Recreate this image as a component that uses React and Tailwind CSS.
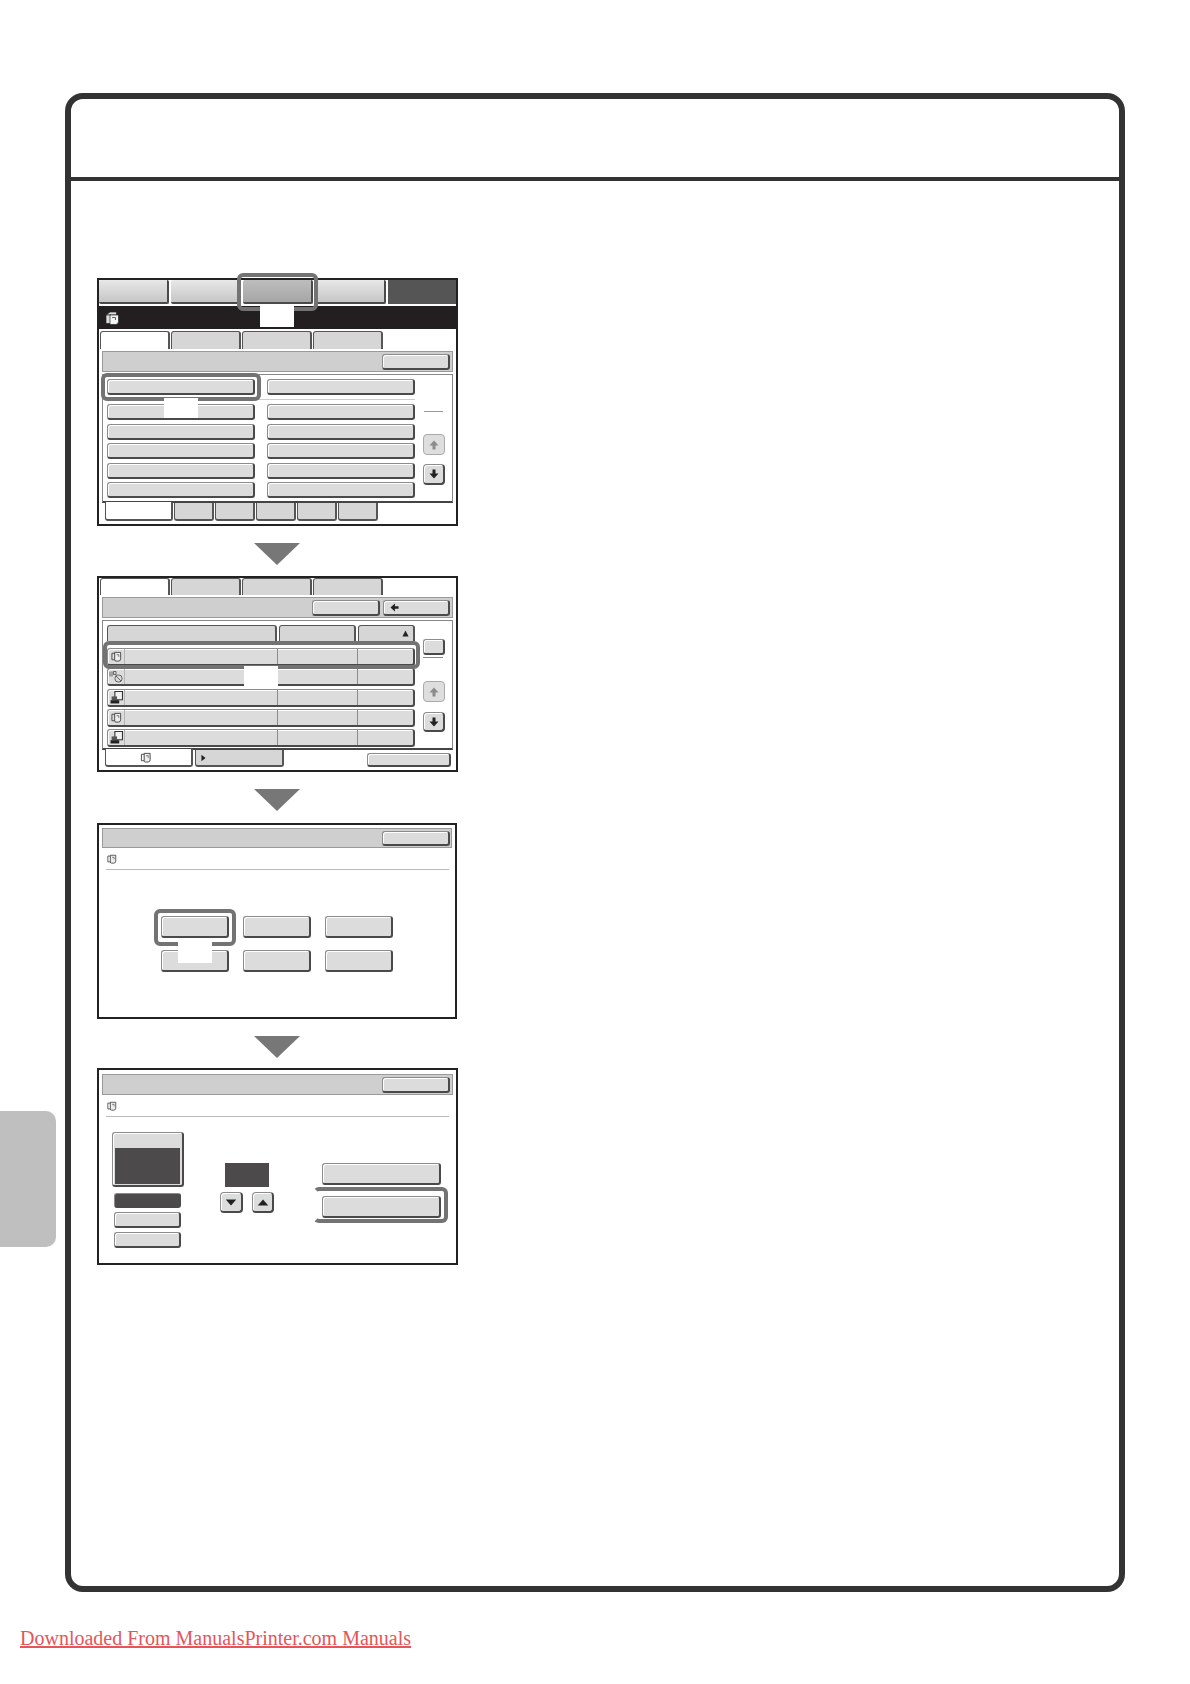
import React from 'react';

// shared button look of the touch panel
const edge = 'border border-[#8c8c8c] border-r-2 border-b-2 border-r-[#4a4a4a] border-b-[#4a4a4a] shadow-[inset_1px_1px_0_#fff]';
const btn = `rounded-[3px] ${edge} bg-[#dcdcdc]`;
const btnDark = `rounded-[3px] ${edge} shadow-none bg-[#4d4a4b]`;
const btnRound = `rounded-[4px] ${edge} bg-[#dcdcdc]`;
const topTab = 'rounded-[2px] border-r-2 border-b-2 border-[#4a4a4a] bg-gradient-to-b from-[#e8e8e8] to-[#c6c6c6]';
const topTabOn = 'rounded-[2px] border-r-2 border-b-2 border-[#4a4a4a] bg-gradient-to-b from-[#bdbdbd] to-[#a6a6a6]';
const greyTab = 'rounded-t-[3px] border border-b-0 border-[#555] border-r-2 bg-[#d6d6d6]';
const whiteTab = 'rounded-t-[3px] border border-b-0 border-[#555] border-r-2 bg-white';
const bottomTab = 'rounded-b-[3px] border border-t-0 border-[#555] border-r-2 border-b-2 bg-[#d6d6d6]';
const bottomOn = 'relative -mt-px rounded-b-[3px] border border-t-0 border-[#555] border-r-2 border-b-2 bg-white';
const bar = 'flex items-center justify-end border border-[#9a9a9a] bg-[#cfcfcf]';
const ring = 'absolute rounded-[6px] border-4 border-[#737373]';
const listPanel = 'ml-[3px] mt-[2px] flex w-[351px] border border-[#888] border-b-2 border-b-[#444] pl-[4px] pt-[4px]';

const CopyIcon = ({ className }) => (
    <svg viewBox="0 0 12 12" className={className} fill="none" stroke="#444" strokeWidth="1">
        <path d="M1 2.5h4v7H1z" />
        <path d="M4 1.5h6.5v7a2.5 2.5 0 0 1-2.5 2.5H5.5a1.5 1.5 0 0 1-1.5-1.5z" fill="#eee" />
        <path d="M6 4h2.5v2.5" strokeWidth="0.7" />
    </svg>
);

const SendIcon = ({ className }) => (
    <svg viewBox="0 0 14 12" className={className} fill="none" stroke="#555" strokeWidth="0.9">
        <path d="M1 0.5v5M3 0.5v5M4.5 0.5h2.5v3H4.5z" />
        <circle cx="9.5" cy="7.5" r="3.6" />
        <path d="M7 5l5 5" />
    </svg>
);

const PrintIcon = ({ className }) => (
    <svg viewBox="0 0 12 12" className={className}>
        <path d="M4.5 0.5h7v7.5h-7z" fill="#f2f2f2" stroke="#333" strokeWidth="1" />
        <path d="M1.5 5h5v3.5h-5z" fill="#555" />
        <path d="M0.5 8.5h8v3h-8z" fill="#222" />
    </svg>
);

const StackIcon = () => (
    <svg viewBox="0 0 14 14" className="h-[14px] w-[14px]" fill="#ddd" stroke="#222" strokeWidth="0.7">
        <path d="M1 4l4-3h6.5V4z" />
        <path d="M1 4h5v8.5H1z" />
        <path d="M5 4h8.5v6.5a3 3 0 0 1-3 3H5z" fill="#f4f4f4" />
        <path d="M7 6.5h3.5V9" fill="none" />
    </svg>
);

const ArrowV = ({ up, muted }) => (
    <svg viewBox="0 0 10 10" className="h-[10px] w-[10px]" fill={muted ? '#8c8c8c' : '#222'}>
        <path d={up ? 'M5 0.5L9.5 5.5H6.5V9.5H3.5V5.5H0.5z' : 'M5 9.5L9.5 4.5H6.5V0.5H3.5V4.5H0.5z'} />
    </svg>
);

const Scroll = ({ muted, up, className }) => (
    <div className={`flex w-[22px] items-center justify-center ${className} ${muted ? 'rounded-[4px] border border-[#aaa] bg-[#dedede]' : btnRound}`}>
        <ArrowV up={up} muted={muted} />
    </div>
);

const Tabs = ({ className }) => (
    <div className={`flex gap-px ${className}`}>
        <div className={`w-[70px] ${whiteTab}`} />
        <div className={`w-[70px] ${greyTab}`} />
        <div className={`w-[70px] ${greyTab}`} />
        <div className={`w-[70px] ${greyTab}`} />
    </div>
);

const ListRow = () => (
    <div className="flex gap-[12px]">
        <div className={`h-[16px] w-[148px] ${btn}`} />
        <div className={`h-[16px] w-[148px] ${btn}`} />
    </div>
);

const JobRow = ({ icon }) => (
    <div className={`flex h-[18px] w-[308px] items-center ${btn}`}>
        <div className="flex h-full w-[17px] items-center justify-center border-r border-[#b5b5b5]">{icon}</div>
        <div className="h-full w-[153px] border-r border-[#8c8c8c]" />
        <div className="h-full w-[80px] border-r border-[#8c8c8c]" />
    </div>
);

const FirstScreen = () => (
    <div className="relative h-[248px] w-[361px] border-2 border-[#222] bg-white">
        <div className="flex h-[24px] gap-[2px]">
            <div className={`w-[70px] ${topTab}`} />
            <div className={`w-[70px] ${topTab}`} />
            <div className={`w-[70px] ${topTabOn}`} />
            <div className={`w-[71px] ${topTab}`} />
            <div className="flex-1 bg-[#555]" />
        </div>
        <div className="mt-[2px] flex h-[23px] items-center bg-[#231f20] pl-[6px]">
            <StackIcon />
        </div>
        <Tabs className="ml-[1px] mt-[2px] h-[18px]" />
        <div className={`ml-[3px] mt-[2px] h-[21px] w-[351px] pr-[2px] ${bar}`}>
            <div className={`h-[16px] w-[68px] ${btn}`} />
        </div>
        <div className={`${listPanel} h-[129px]`}>
            <div className="flex flex-col">
                <ListRow />
                <div className="mb-[4px] ml-[-4px] mt-[4px] h-px w-[312px] bg-[#ccc]" />
                <div className="flex flex-col gap-[3.6px]">
                    <ListRow />
                    <ListRow />
                    <ListRow />
                    <ListRow />
                    <ListRow />
                </div>
            </div>
            <div className="ml-[8px] flex flex-col">
                <div className="ml-[1px] mt-[32px] h-px w-[19px] bg-[#999]" />
                <Scroll up muted className="mt-[22px] h-[21px]" />
                <Scroll className="mt-[9px] h-[21px]" />
            </div>
        </div>
        <div className="ml-[6px] flex h-[18px] gap-px">
            <div className={`h-[19px] w-[68px] ${bottomOn}`} />
            <div className={`w-[40px] ${bottomTab}`} />
            <div className={`w-[40px] ${bottomTab}`} />
            <div className={`w-[40px] ${bottomTab}`} />
            <div className={`w-[40px] ${bottomTab}`} />
            <div className={`w-[40px] ${bottomTab}`} />
        </div>
        <div className={`${ring} left-[138px] top-[-7px] h-[38px] w-[81px]`} />
        <div className="absolute left-[161px] top-[25px] h-[22px] w-[34px] bg-white" />
        <div className={`${ring} left-[2px] top-[93px] h-[28px] w-[160px]`} />
        <div className="absolute left-[65px] top-[118px] h-[20px] w-[34px] bg-white" />
    </div>
);

const SecondScreen = () => (
    <div className="relative h-[196px] w-[361px] border-2 border-[#222] bg-white">
        <Tabs className="ml-[1px] h-[17px]" />
        <div className={`ml-[3px] mt-[2px] h-[21px] w-[351px] gap-[3px] pr-[2px] ${bar}`}>
            <div className={`h-[16px] w-[68px] ${btn}`} />
            <div className={`flex h-[16px] w-[67px] items-center pl-[6px] ${btn}`}>
                <svg viewBox="0 0 10 10" className="h-[9px] w-[9px]" fill="#222">
                    <path d="M0.5 5L5.5 0.5V3.5H9.5V6.5H5.5V9.5z" />
                </svg>
            </div>
        </div>
        <div className={`${listPanel} h-[130px]`}>
            <div className="flex flex-col">
                <div className="flex h-[16px] w-[308px] gap-[2px]">
                    <div className={`w-[170px] ${greyTab}`} />
                    <div className={`w-[77px] ${greyTab}`} />
                    <div className={`flex w-[57px] items-center justify-end pr-[4px] ${greyTab}`}>
                        <svg viewBox="0 0 8 8" className="h-[7px] w-[7px]" fill="#222"><path d="M4 0.5L7.5 7.5H0.5z" /></svg>
                    </div>
                </div>
                <div className="mt-[7px] flex flex-col gap-[2.3px]">
                    <JobRow icon={<CopyIcon className="h-[11px] w-[11px]" />} />
                    <JobRow icon={<SendIcon className="h-[12px] w-[14px]" />} />
                    <JobRow icon={<PrintIcon className="h-[13px] w-[13px]" />} />
                    <JobRow icon={<CopyIcon className="h-[11px] w-[11px]" />} />
                    <JobRow icon={<PrintIcon className="h-[13px] w-[13px]" />} />
                </div>
            </div>
            <div className="ml-[8px] flex flex-col">
                <div className={`mt-[14px] h-[16px] w-[22px] ${btn}`} />
                <div className="mt-[2px] h-px w-[20px] bg-[#888]" />
                <Scroll up muted className="mt-[23px] h-[21px]" />
                <Scroll className="mt-[10px] h-[20px]" />
            </div>
        </div>
        <div className="flex h-[18px] items-start">
            <div className={`ml-[6px] flex h-[18px] w-[88px] items-center justify-center ${bottomOn}`}>
                <CopyIcon className="mr-[6px] h-[11px] w-[12px]" />
            </div>
            <div className={`ml-[2px] flex h-[17px] w-[89px] items-center pl-[5px] ${bottomTab}`}>
                <svg viewBox="0 0 6 8" className="h-[8px] w-[5px]" fill="#222"><path d="M0.5 0L5.5 4L0.5 8z" /></svg>
            </div>
            <div className={`ml-auto mr-[5px] mt-[3px] h-[14px] w-[84px] ${btn}`} />
        </div>
        <div className={`${ring} left-[4px] top-[63px] h-[28px] w-[317px]`} />
        <div className="absolute left-[145px] top-[88px] h-[21px] w-[34px] bg-white" />
    </div>
);

const ThirdScreen = () => (
    <div className="relative h-[196px] w-[360px] border-2 border-[#222] bg-white">
        <div className={`ml-[3px] mt-[3px] h-[20px] w-[350px] pr-[1px] ${bar}`}>
            <div className={`h-[15px] w-[68px] ${btn}`} />
        </div>
        <div className="ml-[7px] flex h-[22px] w-[343px] items-center border-b border-[#bbb] pl-px">
            <CopyIcon className="h-[10px] w-[10px]" />
        </div>
        <div className="ml-[62px] mt-[46px] grid w-[232px] grid-cols-3 gap-x-[14px] gap-y-[12px]">
            <div className={`h-[22px] ${btn}`} />
            <div className={`h-[22px] ${btn}`} />
            <div className={`h-[22px] ${btn}`} />
            <div className={`h-[22px] ${btn}`} />
            <div className={`h-[22px] ${btn}`} />
            <div className={`h-[22px] ${btn}`} />
        </div>
        <div className={`${ring} left-[55px] top-[84px] h-[37px] w-[82px]`} />
        <div className="absolute left-[79px] top-[115px] h-[23px] w-[34px] bg-white" />
    </div>
);

const FourthScreen = () => (
    <div className="relative h-[197px] w-[361px] border-2 border-[#222] bg-white">
        <div className={`ml-[3px] mt-[4px] h-[21px] w-[351px] pr-[2px] ${bar}`}>
            <div className={`h-[16px] w-[68px] ${btn}`} />
        </div>
        <div className="ml-[7px] flex h-[22px] w-[343px] items-center border-b border-[#bbb] pl-px">
            <CopyIcon className="h-[10px] w-[10px]" />
        </div>
        <div className="flex">
            <div className="ml-[13px] mt-[15px] flex w-[72px] flex-col">
                <div className={`flex h-[55px] flex-col px-[2px] pt-[15px] ${btn}`}>
                    <div className="h-[36px] bg-[#4d4a4b]" />
                </div>
                <div className="ml-[2px] mt-[6px] flex w-[67px] flex-col gap-[4px]">
                    <div className={`h-[15px] ${btnDark}`} />
                    <div className={`h-[16px] ${btn}`} />
                    <div className={`h-[16px] ${btn}`} />
                </div>
            </div>
            <div className="ml-[36px] mt-[46px] flex w-[54px] flex-col">
                <div className="ml-[5px] h-[24px] w-[44px] bg-[#4d4a4b]" />
                <div className="mt-[5px] flex gap-[9px]">
                    <div className={`flex h-[21px] w-[23px] items-center justify-center ${btnRound}`}>
                        <svg viewBox="0 0 12 8" className="h-[7px] w-[12px]" fill="#222"><path d="M0 0.5H12L6 7.5z" /></svg>
                    </div>
                    <div className={`flex h-[21px] w-[22px] items-center justify-center ${btnRound}`}>
                        <svg viewBox="0 0 12 8" className="h-[7px] w-[12px]" fill="#222"><path d="M0 7.5H12L6 0.5z" /></svg>
                    </div>
                </div>
            </div>
            <div className="ml-[48px] mt-[46px] flex w-[119px] flex-col gap-[11px]">
                <div className={`h-[22px] ${btn}`} />
                <div className={`h-[22px] ${btn}`} />
            </div>
        </div>
        <div className={`${ring} left-[214px] top-[117px] h-[36px] w-[135px] border-l-transparent`} />
    </div>
);

const Arrow = ({ className }) => (
    <div className={`ml-[157px] h-0 w-0 border-x-[23px] border-t-[22px] border-x-transparent border-t-[#777] ${className}`} />
);

const App = () => {
    return (
        <div className="relative h-[1684px] w-[1190px] overflow-hidden bg-white font-['Liberation_Sans',sans-serif]">
            {/* side thumb tab */}
            <div className="absolute left-0 top-[1111px] h-[136px] w-[56px] rounded-r-[10px] bg-[#bfbfbf]" />

            {/* page frame */}
            <div className="ml-[65px] mt-[93px] h-[1499px] w-[1060px] rounded-[18px] border-[6px] border-[#333]">
                <div className="h-[82px] border-b-4 border-[#333]" />
                <div className="pl-[26px] pt-[97px]">
                    <FirstScreen />
                    <Arrow className="mt-[17px]" />
                    <div className="mt-[11px]"><SecondScreen /></div>
                    <Arrow className="mt-[17px]" />
                    <div className="mt-[12px]"><ThirdScreen /></div>
                    <Arrow className="mt-[17px]" />
                    <div className="mt-[10px]"><FourthScreen /></div>
                </div>
            </div>

            <a href="#" className="ml-[20px] mt-[34px] block w-fit font-['Liberation_Serif',serif] text-[20px] leading-[24px] text-[#e5555a] underline">
                Downloaded From ManualsPrinter.com Manuals
            </a>
        </div>
    );
};

export default App;
